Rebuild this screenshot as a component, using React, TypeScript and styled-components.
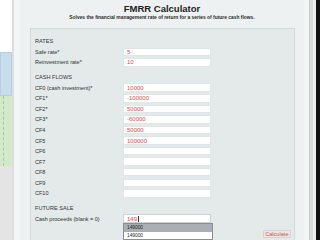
import { FC } from "react"
import styled, { createGlobalStyle } from "styled-components"

const GlobalStyle = createGlobalStyle`
    html, body {
        margin: 0;
        padding: 0;
        background: #ffffff;
    }
    body {
        font-family: "Liberation Sans", Arial, sans-serif;
    }
`

const Page = styled.div`
    display: flex;
    width: 320px;
    height: 240px;
    overflow: hidden;
`

// left edge of the browser window / page behind
const LeftRail = styled.div`
    display: flex;
    flex-direction: column;
    width: 12px;
    border-right: 2px solid #dedede;
    background: #e4e4e4;
`

const RailBlock = styled.div<{ $h: number, $bg: string, $border?: string }>`
    height: ${({ $h }) => $h}px;
    background: ${({ $bg }) => $bg};
    border: ${({ $border }) => $border ? `1px solid ${$border}` : "none"};
    box-sizing: border-box;
`

const GreenBlock = styled.div`
    height: 70px;
    background: #d3e9c9;
    border-left: 1px dashed #a3cb92;
    margin-left: 3px;
    box-shadow: -3px 0 0 #d3e9c9;
`

const Gutter = styled.div`
    width: 6px;
    background: #f2f5f5;
`

const Main = styled.div`
    display: flex;
    flex-direction: column;
    width: 284px;
    background: #edf1f1;
`

const Header = styled.div`
    display: flex;
    flex-direction: column;
    align-items: center;
    padding-top: 3px;
    margin-bottom: 7px;
    color: #1e1e1e;
`

const Title = styled.div`
    font-size: 9.5px;
    font-weight: bold;
    line-height: 11px;
`

const Subtitle = styled.div`
    font-size: 4.9px;
    font-weight: bold;
    line-height: 7px;
    color: #2a2a2a;
`

const Panel = styled.div`
    position: relative;
    flex: 1;
    margin-left: 10px;
    width: 265px;
    box-sizing: border-box;
    padding: 8px 0 0 4px;
    background: #e4eaea;
    border: 1px solid #d2dada;
    border-bottom: none;
`

const Section = styled.div`
    & + & {
        margin-top: 5.3px;
    }
`

const SectionTitle = styled.div`
    height: 9.5px;
    line-height: 9.5px;
    font-size: 5.6px;
    color: #333333;
`

const Row = styled.div`
    position: relative;
    display: grid;
    grid-template-columns: 88px 88px;
    height: 10.57px;
    align-items: center;
`

const Label = styled.div`
    font-size: 5.5px;
    color: #2e2e2e;
`

const Field = styled.div<{ $focused?: boolean }>`
    height: 8.5px;
    box-sizing: border-box;
    background: #ffffff;
    border: 1px solid ${({ $focused }) => $focused ? "#cdd2d2" : "#e0e5e5"};
    padding-left: 3px;
    display: flex;
    align-items: center;
    font-size: 6px;
    color: #d64c4c;
`

const Caret = styled.span`
    display: inline-block;
    width: 0.6px;
    height: 6px;
    margin-left: 0.5px;
    background: #333;
`

const Suggestions = styled.div`
    position: absolute;
    left: 88px;
    top: 9.6px;
    width: 88px;
    border: 0.6px solid #8a8f94;
    background: #ffffff;
    z-index: 2;
`

const Suggestion = styled.div<{ $active?: boolean }>`
    height: 7.6px;
    line-height: 7.6px;
    padding-left: 3px;
    font-size: 4.8px;
    color: #222;
    background: ${({ $active }) => $active ? "#a9afb5" : "#ffffff"};
`

const Footer = styled.div`
    display: flex;
    justify-content: flex-end;
    padding-right: 3px;
    margin-top: 6px;
`

const CalcButton = styled.button`
    height: 8.5px;
    padding: 0 1.5px;
    font-family: "Liberation Sans", Arial, sans-serif;
    font-size: 5.6px;
    line-height: 6px;
    color: #c25252;
    background: #efe6e6;
    border: 0.6px solid #dccfcf;
    border-radius: 1px;
`

const RightRail = styled.div`
    display: flex;
    flex: 1;
`

const Strip = styled.div<{ $w: number, $bg: string }>`
    width: ${({ $w }) => $w}px;
    background: ${({ $bg }) => $bg};
`

interface FieldRow {
    label: string,
    value?: string,
}

const rates: FieldRow[] = [
    { label: "Safe rate*", value: "5" },
    { label: "Reinvestment rate*", value: "10" },
]

const cashFlows: FieldRow[] = [
    { label: "CF0 (cash investment)*", value: "10000" },
    { label: "CF1*", value: "-100000" },
    { label: "CF2*", value: "50000" },
    { label: "CF3*", value: "-60000" },
    { label: "CF4", value: "50000" },
    { label: "CF5", value: "100000" },
    { label: "CF6" },
    { label: "CF7" },
    { label: "CF8" },
    { label: "CF9" },
    { label: "CF10" },
]

const Rows: FC<{ rows: FieldRow[] }> = ({ rows }) => (
    <>
        {rows.map(r => (
            <Row key={r.label}>
                <Label>{r.label}</Label>
                <Field>{r.value}</Field>
            </Row>
        ))}
    </>
)

const App: FC = () => {
    return (
        <>
            <GlobalStyle />
            <Page>
                <LeftRail>
                    <RailBlock $h={52} $bg="#ffffff" />
                    <RailBlock $h={44} $bg="#c8dcea" $border="#b9cfdf" />
                    <GreenBlock />
                </LeftRail>
                <Gutter />
                <Main>
                    <Header>
                        <Title>FMRR Calculator</Title>
                        <Subtitle>Solves the financial management rate of return for a series of future cash flows.</Subtitle>
                    </Header>
                    <Panel>
                        <Section>
                            <SectionTitle>RATES</SectionTitle>
                            <Rows rows={rates} />
                        </Section>
                        <Section>
                            <SectionTitle>CASH FLOWS</SectionTitle>
                            <Rows rows={cashFlows} />
                        </Section>
                        <Section>
                            <SectionTitle>FUTURE SALE</SectionTitle>
                            <Row>
                                <Label>Cash proceeds (blank = 0)</Label>
                                <Field $focused>149<Caret /></Field>
                                <Suggestions>
                                    <Suggestion $active>149000</Suggestion>
                                    <Suggestion>149000</Suggestion>
                                </Suggestions>
                            </Row>
                        </Section>
                        <Footer>
                            <CalcButton>Calculate</CalcButton>
                        </Footer>
                    </Panel>
                </Main>
                <RightRail>
                    <Strip $w={5} $bg="#f3f6f6" />
                    <Strip $w={1} $bg="#c8c8c8" />
                    <Strip $w={3} $bg="#dadada" />
                    <Strip $w={3} $bg="#ececec" />
                    <Strip $w={4} $bg="#111111" />
                </RightRail>
            </Page>
        </>
    )
}

export default App
